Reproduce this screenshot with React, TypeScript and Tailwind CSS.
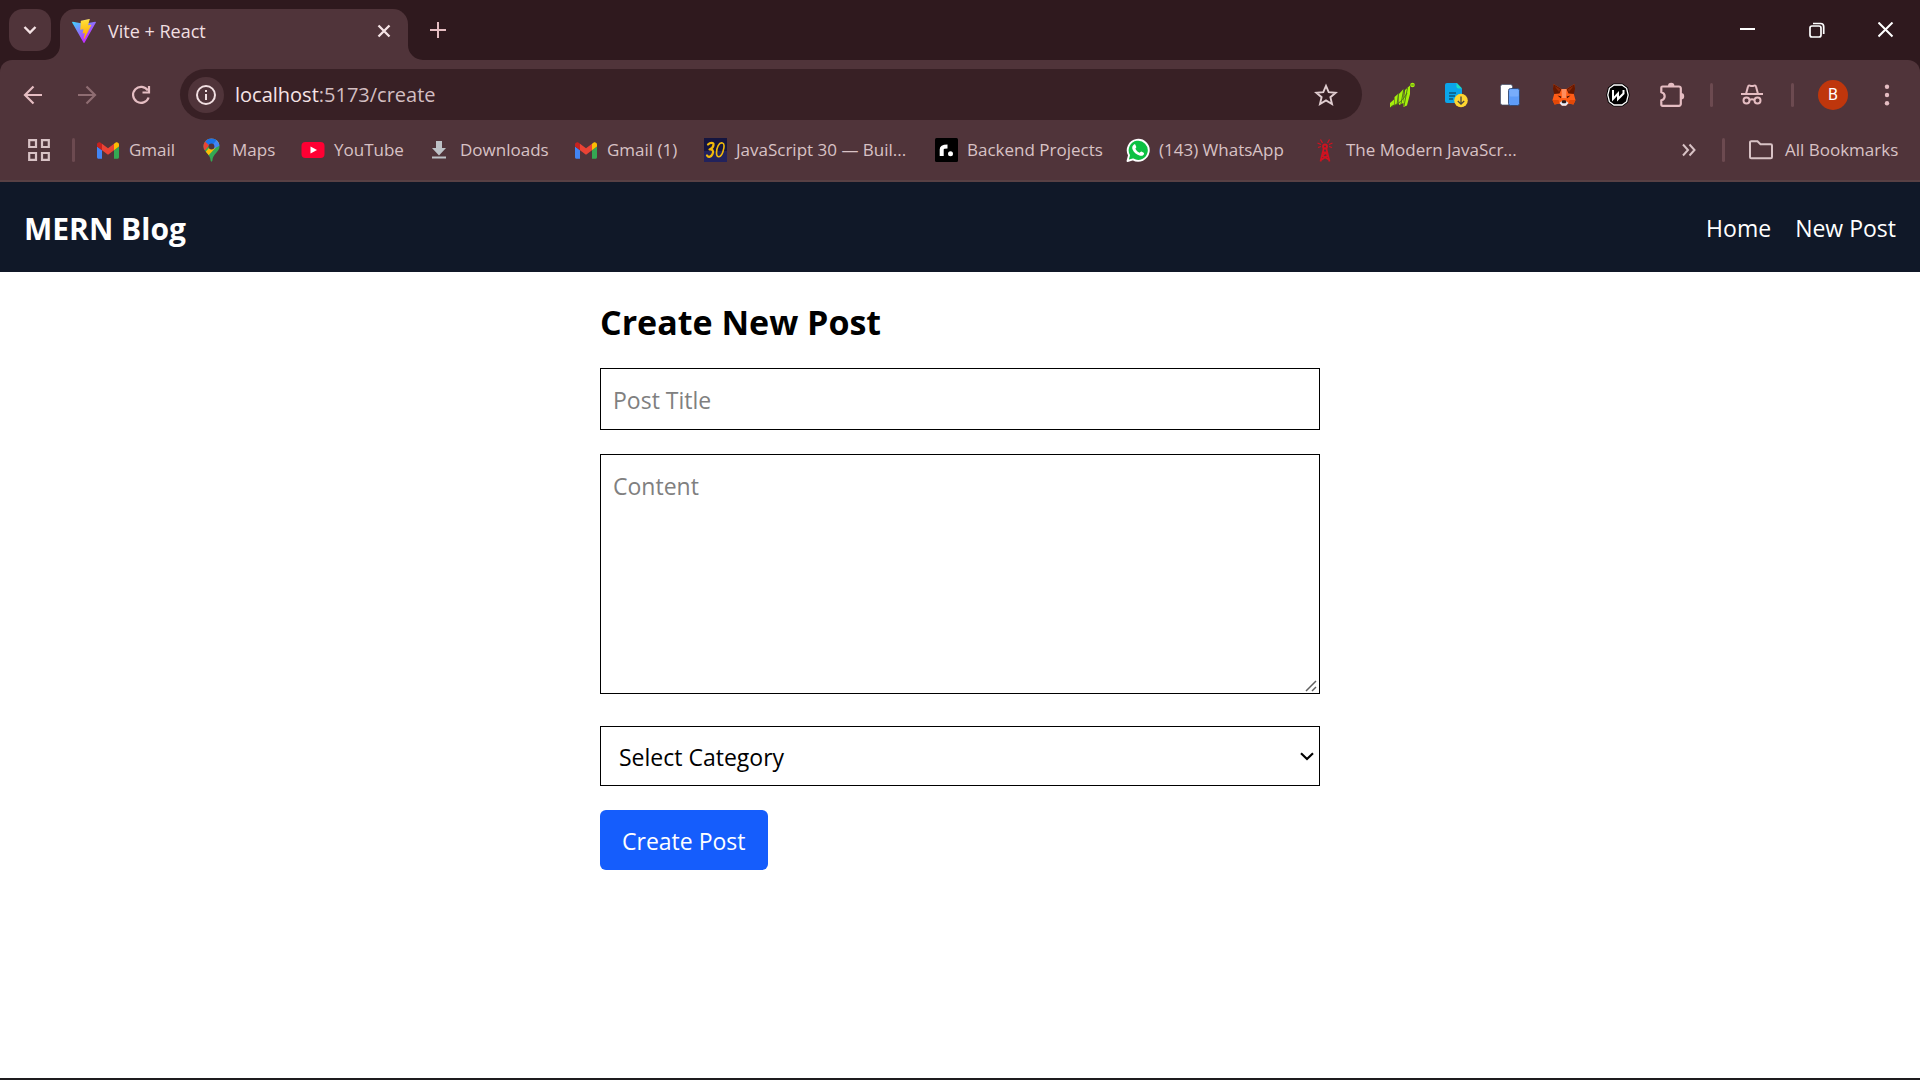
import React from "react";

function Gmail() {
  return (
    <svg width="22" height="17" viewBox="52 42 88 66">
      <path fill="#4285f4" d="M58 108h14V74L52 59v43c0 3.32 2.69 6 6 6" />
      <path fill="#34a853" d="M120 108h14c3.32 0 6-2.69 6-6V59l-20 15" />
      <path fill="#fbbc04" d="M120 48v26l20-15v-8c0-7.42-8.47-11.65-14.4-7.2" />
      <path fill="#ea4335" d="M72 74V48l24 18 24-18v26L96 92" />
      <path fill="#c5221f" d="M52 51v8l20 15V48l-5.6-4.2c-5.94-4.45-14.4-.22-14.4 7.2" />
    </svg>
  );
}

function MapsPin() {
  return (
    <svg width="17" height="24" viewBox="0 0 17 24">
      <clipPath id="pin">
        <path d="M8.500 0.500C13 0.500 16.500 4 16.500 8.500C16.500 14 9.800 15.500 9.400 22.500C9.300 24 7.700 24 7.600 22.500C7.200 15.500 0.500 14 0.500 8.500C0.500 4 4 0.500 8.500 0.500Z" />
      </clipPath>
      <g clipPath="url(#pin)">
        <rect width="17" height="24" fill="#34a853" />
        <path d="M-1 16L9 4L17 -2H-1Z" fill="#ea4335" />
        <path d="M1.500 15L14 1L18 4L4 19Z" fill="#fbbc04" />
        <path d="M6.500 9.500L14 1L20 2V6L10 11Z" fill="#4285f4" />
        <path d="M2 3.500L8 9L14 1.500L8-2Z" fill="#1a73e8" />
      </g>
      <circle cx="8.500" cy="8.500" r="2.900" fill="#50343a" />
    </svg>
  );
}

function YouTube() {
  return (
    <svg width="24" height="16" viewBox="0 0 24 16">
      <rect x="0.500" width="23" height="16" rx="4" fill="#ff0033" />
      <path d="M9.500 4.500L16 8L9.500 11.500Z" fill="#fff" />
    </svg>
  );
}

function Download() {
  return (
    <svg width="16" height="20" viewBox="0 0 16 20" fill="#bdc1c6">
      <path d="M5 1h6v7h4l-7 7.500L1 8h4zM1 16.500h14v2H1z" />
    </svg>
  );
}

function Js30() {
  return (
    <svg width="23" height="24" viewBox="0 0 23 24">
      <rect width="23" height="24" fill="#15153f" />
      <rect y="13" width="23" height="11" fill="#22225c" />
      <g fill="none" stroke="#f0b90b" strokeLinecap="round" strokeLinejoin="round">
        <path d="M4 6.500C6 4.500 10 4 9.500 7C9.200 9.500 7 11 5.500 11.500C8.500 11 10 13 8.500 16C7.500 18.500 4.500 20 3 17.500" strokeWidth="2.200" />
        <path d="M18.500 5C15 4 12.500 9.500 12.500 15C12.500 20.500 17 20 19 13.500C20.500 9 20.500 5.500 18.500 5Z" strokeWidth="1.600" />
      </g>
    </svg>
  );
}

function Roadmap() {
  return (
    <svg width="23" height="24" viewBox="0 0 23 24">
      <rect width="23" height="24" rx="1.500" fill="#000" />
      <path d="M6.700 18V11.500Q6.700 8.500 12.500 8.500" fill="none" stroke="#fff" strokeWidth="4" />
      <circle cx="15.500" cy="15.800" r="2.500" fill="#fff" />
    </svg>
  );
}

function WhatsApp() {
  return (
    <svg width="24" height="24" viewBox="0 0 24 24">
      <path d="M1.500 23L3 17.300A10.500 10.500 0 1 1 7 21.400Z" fill="#0dc143" stroke="#fff" strokeWidth="1.900" strokeLinejoin="round" />
      <path d="M8 6.400C8.400 6 9 6.100 9.300 6.600L10.300 9C10.400 9.500 9.400 10.400 9.400 10.800C10.400 12.700 11.700 13.900 13.600 14.800C14 14.800 14.900 13.500 15.400 13.600L17.700 14.700C18.300 15 18 16.300 17.400 16.900C16.400 17.900 15 18.100 13.500 17.600C10.300 16.500 7.800 14.300 6.500 11.200C5.800 9.300 6.500 7.400 8 6.400Z" fill="#fff" />
    </svg>
  );
}

function Tower() {
  return (
    <svg width="18" height="24" viewBox="0 0 18 24" fill="none" stroke="#d01220">
      <circle cx="9" cy="8.500" r="2" strokeWidth="1.900" />
      <path d="M7.800 10L4.500 23.500M10.200 10L13.500 23.500M7 13.500L11.500 16.500M11 13.500L5.800 18M6 17.500L12.700 21.500M12 17.500L5 22" strokeWidth="1.700" />
      <path d="M6.500 5L4.500 1.500M11.500 5L13.500 1.500M5 6.500L1.500 5M13 6.500L16.500 5M5 8.500L2 9.500M13 8.500L16 9.500" strokeWidth="1.200" />
    </svg>
  );
}

const bookmarks = [
  { label: "Gmail", icon: <Gmail />, width: "w-[45px]" },
  { label: "Maps", icon: <MapsPin />, width: "w-[44px]" },
  { label: "YouTube", icon: <YouTube />, width: "w-[68px]" },
  { label: "Downloads", icon: <Download />, width: "w-[89px]" },
  { label: "Gmail (1)", icon: <Gmail />, width: "w-[71px]" },
  { label: "JavaScript 30 — Buil...", icon: <Js30 />, width: "w-[173px]" },
  { label: "Backend Projects", icon: <Roadmap />, width: "w-[134px]" },
  { label: "(143) WhatsApp", icon: <WhatsApp />, width: "w-[129px]" },
  { label: "The Modern JavaScr...", icon: <Tower />, width: "w-[174px]" },
];

function Vite() {
  return (
    <svg width="24" height="24" viewBox="0 0 256 257">
      <defs>
        <linearGradient id="va" x1="-.828%" x2="57.636%" y1="7.652%" y2="78.411%">
          <stop offset="0%" stopColor="#41D1FF" />
          <stop offset="100%" stopColor="#BD34FE" />
        </linearGradient>
        <linearGradient id="vb" x1="43.376%" x2="50.316%" y1="2.242%" y2="89.03%">
          <stop offset="0%" stopColor="#FFEA83" />
          <stop offset="8.333%" stopColor="#FFDD35" />
          <stop offset="100%" stopColor="#FFA800" />
        </linearGradient>
      </defs>
      <path fill="url(#va)" d="M255.153 37.938L134.897 252.976c-2.483 4.440-8.862 4.466-11.382.048L.875 37.958c-2.746-4.814 1.371-10.646 6.827-9.670l120.385 21.517a6.537 6.537 0 0 0 2.322-.004l117.867-21.483c5.438-.991 9.574 4.796 6.877 9.620Z" />
      <path fill="url(#vb)" d="M185.432.063L96.440 17.501a3.268 3.268 0 0 0-2.634 3.014l-5.474 92.456a3.268 3.268 0 0 0 3.997 3.378l24.777-5.718c2.318-.535 4.413 1.507 3.936 3.838l-7.361 36.047c-.495 2.426 1.782 4.500 4.151 3.780l15.304-4.649c2.372-.720 4.652 1.360 4.150 3.788l-11.698 56.621c-.732 3.542 3.979 5.473 5.943 2.437l1.313-2.028l72.516-144.720c1.215-2.423-.880-5.186-3.540-4.672l-25.505 4.922c-2.396.462-4.435-1.770-3.759-4.114l16.646-57.705c.677-2.350-1.370-4.583-3.769-4.113Z" />
    </svg>
  );
}

function GreenBars() {
  return (
    <svg width="26" height="26" viewBox="0 0 26 26">
      <g fill="#a6f00a">
        <path d="M1 21L5 17.500V22.500L1 25.500ZM5.500 15L9.500 11.500V21.500L5.500 23ZM10 12L14.500 7V21L10 23ZM14.500 21L16 8L21 3.500V12L18 23.500L14.500 25Z" />
        <circle cx="23.500" cy="3" r="2.300" />
      </g>
      <path d="M9.500 11L8 23M14.800 7L12 22M18.500 6L15 24M2 24.500C9 23 15 17 18 11" stroke="#456e17" strokeWidth="0.900" fill="none" />
      <path d="M22.300 3H24.800" stroke="#456e17" strokeWidth="0.800" />
    </svg>
  );
}

function DocDownload() {
  return (
    <svg width="24" height="26" viewBox="0 0 24 26">
      <path d="M3 1H13L18 6.500V19a2 2 0 0 1-2 2H3a2 2 0 0 1-2-2V3a2 2 0 0 1 2-2Z" fill="#0aa5ea" />
      <path d="M12.500 1L18 6.500H14.500a2 2 0 0 1-2-2Z" fill="#1de0bd" />
      <path d="M5 11H12M5 14H11M5 17H9" stroke="#11577a" strokeWidth="1.400" />
      <circle cx="17" cy="18.500" r="6.800" fill="#fed630" />
      <path d="M17 14.500V22M13.800 19L17 22.200L20.200 19" fill="none" stroke="#444" strokeWidth="1.300" />
    </svg>
  );
}

function Panels() {
  return (
    <svg width="22" height="24" viewBox="0 0 22 24">
      <rect x="1.500" y="1.500" width="12" height="20.500" rx="2" fill="#fff" stroke="#42506c" strokeWidth="0.700" />
      <rect x="9.500" y="5.500" width="11" height="17" rx="2" fill="#5e9cf8" stroke="#30466e" strokeWidth="0.900" />
      <rect x="10.500" y="6.500" width="9" height="7" rx="1" fill="#78adfb" />
    </svg>
  );
}

function Fox() {
  return (
    <svg width="24" height="24" viewBox="0 0 24 24">
      <path d="M1.500 1L9.500 6H14.500L22.500 1L21.800 11L23.500 17L21.500 21.500L16.500 20.500L14 22.800H10L7.500 20.500L2.500 21.500L0.500 17L2.200 11Z" fill="#ff5c16" />
      <path d="M1.500 1L9.500 6L7.500 10.500L2.200 11L1 6ZM22.500 1L14.500 6L16.500 10.500L21.800 11L23 6Z" fill="#661800" />
      <path d="M2.500 3L8.500 6.500L7 9ZM21.500 3L15.500 6.500L17 9Z" fill="#8e2a08" />
      <path d="M9.500 6H14.500L14 15H10Z" fill="#ff8d5d" />
      <path d="M5.500 12.500L9.300 13.500L8.800 15.300ZM18.500 12.500L14.700 13.500L15.200 15.300Z" fill="#3a1008" />
      <path d="M0.500 17H6.500L7.500 20.500L2.500 21.500ZM23.500 17H17.500L16.500 20.500L21.500 21.500Z" fill="#e34807" />
      <path d="M7.500 20L10 18H14L16.500 20L14 22.800H10Z" fill="#e7ebf6" />
      <path d="M9.500 19L10.500 17.200H13.500L14.500 19L13.500 20.200H10.500Z" fill="#2b1b1b" />
    </svg>
  );
}

function WBadge() {
  return (
    <svg width="24" height="24" viewBox="0 0 24 24">
      <path d="M7.500 0.500H16.500L22 4.500L23.800 12L22 19.500L16.500 23.500H7.500L2 19.500L0.200 12L2 4.500Z" fill="#000" />
      <path d="M8 2H16L20.600 5.300L22.200 12L20.600 18.700L16 22H8L3.400 18.700L1.800 12L3.400 5.300Z" fill="#000" stroke="#fff" strokeWidth="1.300" />
      <path d="M7 7V16L12 10.500V16L17.500 10.500V7" fill="none" stroke="#fff" strokeWidth="2" />
    </svg>
  );
}

function Puzzle() {
  return (
    <svg width="26" height="26" viewBox="0 0 26 26">
      <path d="M3.500 4.500H20a1.800 1.800 0 0 1 1.800 1.800V22a1.800 1.800 0 0 1-1.800 1.800H3.500a1.200 1.200 0 0 1-1.200-1.200V18.200C6.800 17.200 6.800 11.200 2.300 10.200V5.700a1.200 1.200 0 0 1 1.200-1.200Z" fill="none" stroke="#e5bdc2" strokeWidth="2.200" strokeLinejoin="round" />
      <path d="M9 4a3.200 3.200 0 0 1 6.400 0ZM22 11a3.200 3.200 0 0 1 0 6.400Z" fill="#e5bdc2" />
    </svg>
  );
}

function Incognito() {
  return (
    <svg width="24" height="24" viewBox="0 0 24 24" fill="none" stroke="#e5bdc2" strokeWidth="2">
      <path d="M1 11H23" />
      <path d="M6 11L8 3.500C8.200 2.500 9 2.300 9.800 2.600C11.200 3.200 12.800 3.200 14.200 2.600C15 2.300 15.800 2.500 16 3.500L18 11" />
      <circle cx="6.500" cy="17.500" r="3" />
      <circle cx="17.500" cy="17.500" r="3" />
      <path d="M9.500 17Q12 15.500 14.500 17" />
    </svg>
  );
}

const extensions = [
  { name: "Performance extension", icon: <GreenBars /> },
  { name: "Document downloader", icon: <DocDownload /> },
  { name: "Panels extension", icon: <Panels /> },
  { name: "MetaMask", icon: <Fox /> },
  { name: "W extension", icon: <WBadge /> },
  { name: "Extensions", icon: <Puzzle /> },
];

function IconButton({ label, className = "", children }: { label: string; className?: string; children: React.ReactNode }) {
  return (
    <button type="button" aria-label={label} className={"flex shrink-0 items-center justify-center " + className}>
      {children}
    </button>
  );
}

function Divider() {
  return <span className="h-6 w-[3px] shrink-0 rounded-full bg-[#6c4a50]" />;
}

function TabStrip() {
  return (
    <div className="flex h-[60px] items-end bg-[#2f191e]">
      <IconButton label="Search tabs" className="mb-[9px] ml-[9px] size-[42px] rounded-[14px] bg-[#50343a]">
        <svg width="14" height="10" viewBox="0 0 14 10" fill="none" stroke="#f5e3e5" strokeWidth="2.400">
          <path d="M1.500 2L7 7.500L12.500 2" />
        </svg>
      </IconButton>
      <div className="relative ml-[9px] flex h-[51px] w-[348px] items-center rounded-t-[15px] bg-[#50343a] pl-3">
        <svg className="absolute bottom-0 -left-[15px]" width="15" height="15" viewBox="0 0 15 15">
          <path d="M15 0V15H0A15 15 0 0 0 15 0Z" fill="#50343a" />
        </svg>
        <svg className="absolute -right-[15px] bottom-0" width="15" height="15" viewBox="0 0 15 15">
          <path d="M0 0V15H15A15 15 0 0 1 0 0Z" fill="#50343a" />
        </svg>
        <span className="mb-2">
          <Vite />
        </span>
        <span className="mb-[6px] ml-3 flex-1 text-[18px] text-[#f1dfe1]">Vite + React</span>
        <IconButton label="Close tab" className="mr-3 mb-2 size-6">
          <svg width="14" height="14" viewBox="0 0 14 14" stroke="#f5e3e5" strokeWidth="2.300">
            <path d="M1.500 1.500L12.500 12.500M12.500 1.500L1.500 12.500" />
          </svg>
        </IconButton>
      </div>
      <IconButton label="New tab" className="mb-[18px] ml-[18px] size-6">
        <svg width="16" height="16" viewBox="0 0 16 16" stroke="#e5bdc2" strokeWidth="2">
          <path d="M8 0V16M0 8H16" />
        </svg>
      </IconButton>
      <div className="ml-auto flex h-full">
        <IconButton label="Minimize" className="w-[69px]">
          <svg width="16" height="16" viewBox="0 0 16 16" stroke="#fff" strokeWidth="2">
            <path d="M0 7H15" />
          </svg>
        </IconButton>
        <IconButton label="Restore" className="w-[69px]">
          <svg width="16" height="16" viewBox="0 0 16 16" fill="none" stroke="#fff" strokeWidth="1.700">
            <rect x="1" y="4" width="11" height="11" rx="2" />
            <path d="M4 1.500H11.500a3.200 3.200 0 0 1 3.200 3.200V12" />
          </svg>
        </IconButton>
        <IconButton label="Close" className="w-[69px]">
          <svg width="16" height="16" viewBox="0 0 16 16" stroke="#fff" strokeWidth="2">
            <path d="M0.500 0.500L14.500 14.500M14.500 0.500L0.500 14.500" />
          </svg>
        </IconButton>
      </div>
    </div>
  );
}

function Toolbar() {
  return (
    <div className="flex h-[69px] items-center pr-[6px] pl-[6px]">
      <IconButton label="Back" className="w-[54px]">
        <svg width="20" height="20" viewBox="0 0 20 20" fill="none" stroke="#e5bdc2" strokeWidth="2.200">
          <path d="M19 10H2.500M10.500 1.500L2 10L10.500 18.500" />
        </svg>
      </IconButton>
      <IconButton label="Forward" className="w-[54px]">
        <svg width="20" height="20" viewBox="0 0 20 20" fill="none" stroke="#8f6d72" strokeWidth="2.200">
          <path d="M1 10H17.500M9.500 1.500L18 10L9.500 18.500" />
        </svg>
      </IconButton>
      <IconButton label="Reload" className="w-[54px]">
        <svg width="20" height="20" viewBox="0 0 20 20" fill="none" stroke="#e5bdc2" strokeWidth="2.200">
          <path d="M16.800 5.500A8 8 0 1 0 17.600 12.500M18 1V7.500H11.500" />
        </svg>
      </IconButton>
      <div className="ml-3 flex h-[51px] flex-1 items-center rounded-full bg-[#382025] pr-6 pl-2">
        <IconButton label="View site information" className="size-9 rounded-full bg-[#50343a]">
          <svg width="20" height="20" viewBox="0 0 20 20" fill="none" stroke="#f1dfe1" strokeWidth="2">
            <circle cx="10" cy="10" r="9" />
            <path d="M10 9V15M10 5V7" />
          </svg>
        </IconButton>
        <div className="relative ml-[11px] flex-1">
          <span aria-hidden="true" className="block text-[20px] text-[#d3bec1]">
            <span className="text-[#f6e4e6]">localhost</span>:5173/create
          </span>
          <input aria-label="Address" className="absolute inset-0 w-full bg-transparent text-transparent outline-none" />
        </div>
        <IconButton label="Bookmark this tab" className="size-6">
          <svg width="24" height="24" viewBox="0 0 24 24" fill="none" stroke="#e0cdd0" strokeWidth="1.900">
            <path d="M12 2.800L14.700 9.100L21.700 9.700L16.400 14.200L18 21L12 17.400L6 21L7.600 14.200L2.300 9.700L9.300 9.100Z" />
          </svg>
        </IconButton>
      </div>
      <div className="ml-[13px] flex items-center">
        {extensions.map((e) => (
          <IconButton key={e.name} label={e.name} className="w-[54px]">
            {e.icon}
          </IconButton>
        ))}
      </div>
      <div className="ml-[11px] flex items-center">
        <Divider />
        <IconButton label="Incognito" className="mx-3 w-[54px]">
          <Incognito />
        </IconButton>
        <Divider />
        <IconButton label="Profile" className="ml-3 w-[54px]">
          <span className="flex size-[30px] items-center justify-center rounded-full bg-[#bf360c] font-[Roboto] text-[16px] text-white">B</span>
        </IconButton>
        <IconButton label="Menu" className="w-[54px]">
          <svg width="6" height="22" viewBox="0 0 6 22" fill="#e5bdc2">
            <circle cx="3" cy="2.800" r="2.200" />
            <circle cx="3" cy="11" r="2.200" />
            <circle cx="3" cy="19.200" r="2.200" />
          </svg>
        </IconButton>
      </div>
    </div>
  );
}

function BookmarksBar() {
  return (
    <div className="flex h-[53px] items-start border-b-2 border-[#584044] pr-[21px] pl-[27px] text-[17px] text-[#d8c2c5]">
      <div className="mt-2 flex h-[26px] flex-1 items-center whitespace-nowrap">
        <IconButton label="Apps" className="mr-[21px] size-6">
          <svg width="22" height="22" viewBox="0 0 22 22" fill="none" stroke="#d8c2c5" strokeWidth="2.200">
            <path d="M1.200 1.200H8V8H1.200ZM14 1.200H20.800V8H14ZM1.200 14H8V20.800H1.200ZM14 14H20.800V20.800H14Z" />
          </svg>
        </IconButton>
        <Divider />
        <nav aria-label="Bookmarks" className="ml-[21px] flex items-center gap-[25px]">
          {bookmarks.map((b) => (
            <a key={b.label} href="#" className="flex items-center gap-[9px]">
              <span className="flex size-6 items-center justify-center">{b.icon}</span>
              <span className={b.width}>{b.label}</span>
            </a>
          ))}
        </nav>
        <IconButton label="More bookmarks" className="mr-[21px] ml-auto size-6">
          <svg width="14" height="14" viewBox="0 0 14 14" fill="none" stroke="#d8c2c5" strokeWidth="2">
            <path d="M1 1.500L6 7L1 12.500M7.500 1.500L12.500 7L7.500 12.500" />
          </svg>
        </IconButton>
        <Divider />
        <a href="#" className="ml-6 flex items-center gap-3">
          <svg width="24" height="20" viewBox="0 0 24 20" fill="none" stroke="#d8c2c5" strokeWidth="2">
            <path d="M1 17.500V2.500A1.300 1.300 0 0 1 2.300 1.200H8.500L11.500 4.200H21.700A1.300 1.300 0 0 1 23 5.500V17A1.300 1.300 0 0 1 21.700 18.300H2.300A1.300 1.300 0 0 1 1 17Z" />
          </svg>
          <span className="w-[114px]">All Bookmarks</span>
        </a>
      </div>
    </div>
  );
}

function BlogNav() {
  return (
    <header className="flex h-[90px] items-center justify-between bg-[#101828] px-6 pt-[2px] text-white">
      <a href="#" className="text-[30px] font-bold">MERN Blog</a>
      <nav className="flex gap-6 text-[23px]">
        <a href="#">Home</a>
        <a href="#">New Post</a>
      </nav>
    </header>
  );
}

function PostForm() {
  return (
    <main className="mx-auto w-full max-w-[768px] flex-1 p-6 text-[23px]">
      <h1 className="mb-[22px] pt-[2px] text-[34px]/[48px] font-bold">Create New Post</h1>
      <form className="flex flex-col items-start">
        <input aria-label="Post Title" placeholder="Post Title" className="mb-6 h-[62px] w-full border border-black px-3 pt-[2px] placeholder:text-[#808080]" />
        <div className="relative mb-8 w-full">
          <textarea aria-label="Content" placeholder="Content" className="block h-[240px] w-full resize-y border border-black px-3 pt-[13px] pb-3 leading-9 placeholder:text-[#808080] [&::-webkit-resizer]:hidden" />
          <svg className="pointer-events-none absolute right-[3px] bottom-[2px]" width="12" height="12" viewBox="0 0 12 12" stroke="#606060" strokeWidth="1.500">
            <path d="M1 11L11 1M7 11L11 7" />
          </svg>
        </div>
        <div className="relative mb-6 w-full">
          <select aria-label="Category" className="h-[60px] w-full appearance-none border border-black bg-white px-[18px] pt-[2px]">
            <option>Select Category</option>
            <option>Technology</option>
          </select>
          <svg className="pointer-events-none absolute top-[26px] right-[6px]" width="14" height="9" viewBox="0 0 14 9" fill="none" stroke="#000" strokeWidth="2.200">
            <path d="M1 1.300L7 7L13 1.300" />
          </svg>
        </div>
        <button type="button" className="h-[60px] rounded-md bg-[#155dfc] px-[22px] pt-[2px] text-white">
          Create Post
        </button>
      </form>
    </main>
  );
}

export default function App() {
  return (
    <div className="flex min-h-screen flex-col border-b-2 border-[#1e1c1f] bg-white font-['Open_Sans',sans-serif] text-black">
      <div className="bg-[#2f191e]">
        <TabStrip />
        <div className="rounded-t-[12px] bg-[#50343a]">
          <Toolbar />
          <BookmarksBar />
        </div>
      </div>
      <BlogNav />
      <PostForm />
    </div>
  );
}
